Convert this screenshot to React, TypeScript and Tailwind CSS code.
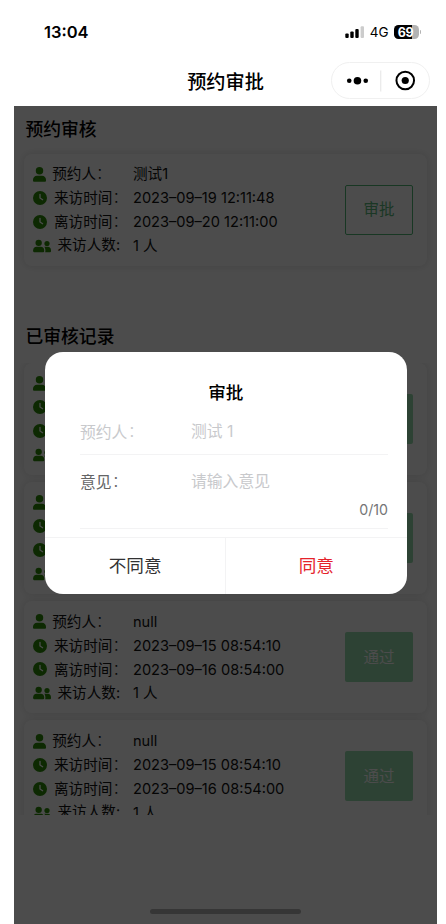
import React from 'react';
import { FaClock } from 'react-icons/fa6';

interface Visit {
  id: number;
  name: string;
  arrive: string;
  leave: string;
  count: number;
}

const pending: Visit[] = [
  { id: 1, name: '测试1', arrive: '2023–09–19 12:11:48', leave: '2023–09–20 12:11:00', count: 1 },
];

const reviewed: Visit[] = [2, 3, 4, 5].map(id => ({
  id,
  name: 'null',
  arrive: '2023–09–15 08:54:10',
  leave: '2023–09–16 08:54:00',
  count: 1,
}));

const UserIcon = () => (
  <svg className="h-[15px] w-[13px]" viewBox="0 0 39 45" fill="currentColor">
    <circle cx="19.5" cy="11.5" r="11.2" />
    <path d="M12 26h15c7 0 12 5 12 12v3c0 2-1 3-3 3H3c-2 0-3-1-3-3v-3c0-7 5-12 12-12z" />
  </svg>
);

const GroupIcon = () => (
  <svg className="h-[14px] w-[18px]" viewBox="0 0 54 42" fill="currentColor">
    <circle cx="17" cy="11.5" r="9.5" />
    <path d="M10.5 23.5h13c6 0 10 4.500 10 10.500v2.500c0 2-1 3-3 3h-27c-2 0-3-1-3-3v-2.500c0-6 4-10.500 10-10.500z" />
    <circle cx="42" cy="13.500" r="7.800" />
    <path d="M34 23.500h10.500c5.500 0 9.500 4.500 9.500 10.500v2.500c0 2-1 3-3 3H36.500c.8-2 .8-4 .5-7-.3-3.500-1.200-6.500-3-9z" />
  </svg>
);

const Colon = () => (
  <span className="-ml-[3.5px] font-['Noto_Sans_CJK_TC',sans-serif] font-light">：</span>
);

const Row: React.FC<{ icon: React.ReactNode; label: React.ReactNode; value: string }> = ({ icon, label, value }) => (
  <div className="flex h-[23.8px] items-center whitespace-nowrap">
    <div className="flex w-[100.5px] shrink-0 items-center">
      <span className="shrink-0 text-[#2d8a09]">{icon}</span>
      {label}
    </div>
    <span className="pt-[2px]">{value}</span>
  </div>
);

const VisitCard: React.FC<{ visit: Visit; done?: boolean }> = ({ visit, done }) => (
  <div className="mx-[10px] flex h-[112px] shrink-0 items-center justify-between rounded-lg bg-white pl-[8.5px] pr-[14px] text-[14.6px] text-[#111] shadow-[0_0_9px_rgba(0,0,0,0.13)]">
    <div className="mt-[1px]">
      <Row
        icon={<UserIcon />}
        label={<span className="ml-[6.700px]">预约人<Colon /></span>}
        value={visit.name}
      />
      <Row
        icon={<FaClock className="ml-[0.5px] h-[14px] w-[14px]" />}
        label={<span className="ml-[7px]">来访时间<Colon /></span>}
        value={visit.arrive}
      />
      <Row
        icon={<FaClock className="ml-[0.5px] h-[14px] w-[14px]" />}
        label={<span className="ml-[7px]">离访时间<Colon /></span>}
        value={visit.leave}
      />
      <Row
        icon={<GroupIcon />}
        label={<span className="ml-[7px] pt-[1px]">来访人数:</span>}
        value={`${visit.count} 人`}
      />
    </div>
    {done ? (
      <button className="h-[50px] w-[68px] rounded-[2px] bg-[#98dcae] pt-[1px] text-[15.5px] text-white">通过</button>
    ) : (
      <button className="h-[50px] w-[68px] rounded-[2px] border border-[#52b877] text-[15.5px] text-[#5cb87c]">审批</button>
    )}
  </div>
);

const StatusBar = () => (
  <div className="flex h-[56px] shrink-0 items-center justify-between pl-[30px] pr-[16px] pt-[8px]">
    <span className="text-[16.5px] font-semibold">13:04</span>
    <div className="flex items-center">
      <svg width="20" height="13" viewBox="0 0 20 13">
        <rect x="0.3" y="7.5" width="3.4" height="4.5" rx="1" />
        <rect x="5.3" y="5.5" width="3.4" height="6.5" rx="1" />
        <rect x="10.3" y="3" width="3.4" height="9" rx="1" />
        <rect x="15.6" y="0.2" width="3.4" height="11.8" rx="1" fill="#ccc" />
      </svg>
      <span className="ml-[4.5px] text-[13.5px]">4G</span>
      <div className="ml-[5px] flex h-[14px] w-[25px] items-center justify-center rounded-[4.5px] bg-[linear-gradient(to_right,#000_70%,#b3b3b3_70%)] pr-[1px] pt-[1px] text-[12.5px] font-bold leading-[13px] tracking-tight text-white">
        69
      </div>
      <div className="ml-[1px] h-[4px] w-[1.5px] rounded-r bg-[#b3b3b3]"></div>
    </div>
  </div>
);

const NavBar = () => (
  <div className="relative flex h-[49.5px] shrink-0 items-center justify-center">
    <h1 className="pt-[3px] text-[19.2px] font-medium">预约审批</h1>
    <div className="absolute right-[7.5px] top-[6px] h-[37px] w-[98.5px] rounded-full border border-[#f0f0f0]">
      <svg className="h-full w-full" viewBox="0 0 96 35">
        <circle cx="17" cy="17.8" r="2.3" />
        <circle cx="25.2" cy="17.8" r="3.8" />
        <circle cx="33.5" cy="17.8" r="2.3" />
        <path d="M48.5 7.5v21" stroke="#ddd" strokeWidth="0.8" />
        <circle cx="73" cy="17.5" r="8.8" fill="none" stroke="#000" strokeWidth="2" />
        <circle cx="73" cy="17.5" r="3.6" />
      </svg>
    </div>
  </div>
);

const ApprovalDialog = () => (
  <div className="absolute left-[31px] top-[246.5px] flex h-[242px] w-[361.5px] flex-col rounded-[18px] bg-white">
    <h3 className="mt-[26.5px] text-center text-[17.6px] font-medium leading-[28px]">审批</h3>
    <div className="ml-[35px] mr-[18.5px] flex h-[48.5px] border-b border-[#f3f3f4] pt-[13.5px] text-[15.8px] leading-[24px] text-[#c8c9cc]">
      <span className="w-[111px]">预约人<Colon /></span>
      <span>测试 1</span>
    </div>
    <div className="ml-[35px] mr-[18.5px] h-[74px] border-b border-[#f3f3f4] pt-[14.5px] text-[15.8px] leading-[24px]">
      <div className="flex">
        <span className="w-[111px] text-[#646566]">意见<Colon /></span>
        <span className="text-[#c8c9cc]">请输入意见</span>
      </div>
      <div className="mt-[4px] text-right text-[14.2px] leading-[22px] text-[#747576]">0/10</div>
    </div>
    <div className="mt-[8px] flex flex-1 border-t border-[#f3f3f4] text-[17.6px]">
      <button className="flex-1 border-r border-[#f3f3f4] text-[#323233]">不同意</button>
      <button className="flex-1 text-[#e5232b]">同意</button>
    </div>
  </div>
);

const App = () => (
  <div className="h-[924px] w-[446px] overflow-hidden bg-white font-['Inter','Noto_Sans_CJK_SC',sans-serif] text-black">
    <div className="ml-[14px] flex h-full w-[423px] flex-col">
      <StatusBar />
      <NavBar />
      <div className="relative flex flex-1 flex-col overflow-hidden bg-white">
        <h2 className="h-[48px] pl-[11.5px] text-[17.8px] font-medium leading-[48px]">预约审核</h2>
        <div className="h-[159px] shrink-0">
          {pending.map(v => <VisitCard key={v.id} visit={v} />)}
        </div>
        <h2 className="h-[50px] pl-[11.5px] text-[17.8px] font-medium leading-[48px]">已审核记录</h2>
        <div className="flex h-[452px] shrink-0 flex-col gap-[7.3px] overflow-hidden">
          {reviewed.map(v => <VisitCard key={v.id} visit={v} done />)}
        </div>
        <div className="mx-auto mt-[94px] h-[5.5px] w-[151px] shrink-0 rounded-full bg-[#b5b5b5]"></div>
        <div className="absolute inset-0 bg-black/70"></div>
        <ApprovalDialog />
      </div>
    </div>
  </div>
);

export default App;
